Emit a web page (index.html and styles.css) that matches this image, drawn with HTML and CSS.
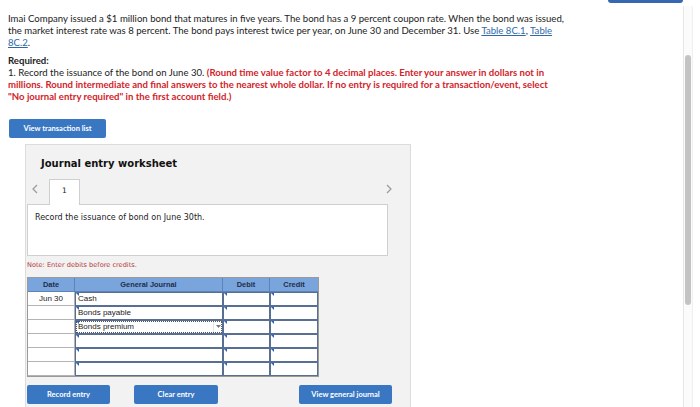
FILE: index.html
```html
<!DOCTYPE html>
<html>
<head>
<meta charset="utf-8">
<link rel="stylesheet" href="styles.css">
</head>
<body>
<div class="page">
  <main class="main">
    <div class="top-btn"></div>
    <p class="intro">Imai Company issued a $1 million bond that matures in five years. The bond has a 9 percent coupon rate. When the bond was issued, the market interest rate was 8 percent. The bond pays interest twice per year, on June 30 and December 31. Use <a href="#">Table 8C.1</a>, <a href="#">Table 8C.2</a>.</p>
    <p class="req"><b>Required:</b><br>1. Record the issuance of the bond on June 30. <span class="warn">(Round time value factor to 4 decimal places. Enter your answer in dollars not in millions. Round intermediate and final answers to the nearest whole dollar. If no entry is required for a transaction/event, select "No journal entry required" in the first account field.)</span></p>
    <button class="btn btn-list">View transaction list</button>
    <section class="panel">
      <h2 class="ws-title">Journal entry worksheet</h2>
      <div class="tabs">
        <svg class="chev" width="8" height="10" viewBox="0 0 8 10"><polyline points="6,1 2,5 6,9" fill="none" stroke="#9a9a9a" stroke-width="1.2"/></svg>
        <div class="tab">1</div>
        <div class="spacer"></div>
        <svg class="chev chev-r" width="8" height="10" viewBox="0 0 8 10"><polyline points="2,1 6,5 2,9" fill="none" stroke="#9a9a9a" stroke-width="1.2"/></svg>
      </div>
      <div class="desc">Record the issuance of bond on June 30th.</div>
      <p class="note">Note: Enter debits before credits.</p>
      <div class="jt">
        <div class="th">Date</div><div class="th">General Journal</div><div class="th">Debit</div><div class="th last">Credit</div>

        <div class="td date">Jun 30</div><div class="td inp">Cash</div><div class="td inp"></div><div class="td inp"></div>
        <div class="td date"></div><div class="td inp">Bonds payable</div><div class="td inp"></div><div class="td inp"></div>
        <div class="td date"></div><div class="td inp sel"><span class="sel-txt">Bonds premium</span><span class="dd"><svg width="5" height="3" viewBox="0 0 5 3"><polygon points="0,0 5,0 2.5,3" fill="#777"/></svg></span></div><div class="td inp"></div><div class="td inp"></div>
        <div class="td date"></div><div class="td inp"></div><div class="td inp"></div><div class="td inp"></div>
        <div class="td date"></div><div class="td inp"></div><div class="td inp"></div><div class="td inp"></div>
        <div class="td date"></div><div class="td inp"></div><div class="td inp"></div><div class="td inp"></div>
      </div>
      <div class="actions">
        <button class="btn btn-rec">Record entry</button>
        <button class="btn btn-clr">Clear entry</button>
        <div class="spacer"></div>
        <button class="btn btn-gj">View general journal</button>
      </div>
    </section>
  </main>
  <aside class="scroll"><div class="thumb"></div></aside>
</div>
</body>
</html>
```
FILE: styles.css
```css
* { box-sizing: border-box; }
html, body { margin: 0; padding: 0; background: #fff; }
body { font-family: Lato, "Open Sans", sans-serif; color: #222; }
.page { display: flex; width: 700px; height: 407px; overflow: hidden; }
.main { width: 683px; padding-left: 8px; }
.top-btn { width: 75px; height: 3px; margin-left: auto; background: #3568b0; border-radius: 0 0 3px 3px; }
.intro { margin: 10px 0 0; width: 565px; font-size: 9.6px; line-height: 11.8px; }
.intro a { color: #2f6aa8; text-decoration: underline; }
.req { margin: 7px 0 0; width: 556px; font-size: 9.6px; line-height: 11.8px; }
.req b { font-weight: 700; }
.warn { color: #d2232a; font-weight: 700; }
.btn { border: none; background: #3a77c3; color: #fff; font-family: Lato, sans-serif; font-weight: 700; font-size: 7.5px; height: 19px; border-radius: 2px; padding: 0; cursor: pointer; }
.btn-list { display: block; margin: 16px 0 0 1px; width: 97px; }
.panel { margin: 6px 0 0 17px; width: 386px; height: 270px; background: #f2f2f2; border: 1px solid #dcdcdc; padding: 0 1px; }
.ws-title { margin: 12px 0 0 14px; font-family: "DejaVu Sans", Verdana, sans-serif; font-weight: 700; font-size: 10px; line-height: 14px; color: #111; }
.tabs { display: flex; align-items: flex-end; width: 366px; height: 26px; margin-top: 7px; }
.chev { margin: 0 0 10px 4px; }
.chev-r { margin: 0 0 10px 0; }
.spacer { flex: 1; }
.tab { width: 31px; height: 26px; margin-left: 10px; margin-bottom: -1px; background: #fff; border: 1px solid #cfcfcf; border-bottom: none; font-family: "DejaVu Sans", Verdana, sans-serif; font-size: 7.5px; text-align: center; padding-top: 6px; position: relative; z-index: 1; }
.desc { width: 361px; height: 52px; background: #fff; border: 1px solid #cfcfcf; font-family: "DejaVu Sans", Verdana, sans-serif; font-size: 8px; padding: 8px 0 0 7px; }
.note { margin: 5px 0 0; height: 8px; font-family: "DejaVu Sans", Verdana, sans-serif; font-size: 6.6px; line-height: 8px; color: #b5383a; }
.jt { margin-top: 8px; display: grid; grid-template-columns: 47px 148px 47px 48px; grid-auto-rows: 14px; width: 292px; border: 1px solid #9a9a9a; font-family: "Liberation Sans", Arial, sans-serif; font-size: 8px; background: #fff; }
.th { background: #7aa5dc; color: #1d2d4d; font-weight: 700; font-size: 7.4px; display: flex; align-items: center; justify-content: center; border-right: 1px solid #5d83b8; border-bottom: 1px solid #5d83b8; }
.th.last { border-right: none; }
.td { display: flex; align-items: center; padding: 0 2px; background: #fff; border-right: 1px solid #b4b4b4; border-bottom: 1px solid #b4b4b4; }
.td.date { justify-content: center; }
.td.inp { border: 1px solid #566f93; position: relative; }
.td.inp::before { content: ""; position: absolute; left: 0; top: 0; border-style: solid; border-width: 3px 0 0 3px; border-color: #2f62c0 transparent transparent transparent; }
.td.sel { outline: 1px dotted #555; outline-offset: -2px; padding-right: 0; }
.sel-txt { flex: 1; }
.dd { width: 9px; height: 10px; display: flex; align-items: center; justify-content: center; border-left: 1px solid #e4e4e4; }
.actions { display: flex; margin-top: 8px; padding-right: 17px; }
.btn-rec { width: 83px; }
.btn-clr { width: 84px; margin-left: 24px; }
.btn-gj { width: 93px; }
.scroll { width: 10px; margin-top: 6px; border-left: 1px solid #e6e6e6; border-right: 1px solid #f0f0f0; background: #fbfbfb; padding-top: 49px; }
.thumb { width: 6px; height: 250px; margin-left: 1px; background: #c3c3c3; border-radius: 3px; }
```
